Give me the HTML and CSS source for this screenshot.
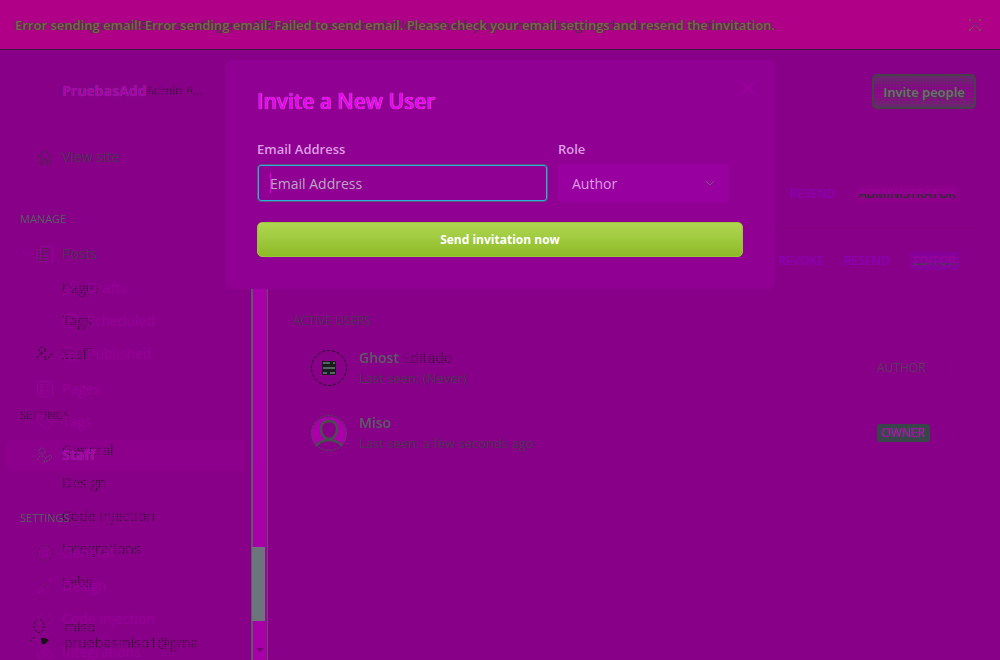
FILE: index.html
```html
<!DOCTYPE html>
<html lang="en">
<head>
<meta charset="utf-8">
<title>Staff - PruebasAdd</title>
<link rel="stylesheet" href="styles.css">
</head>
<body>
<div class="banner" role="alert">
  <div class="banner-text">
    <p class="banner-trail" aria-hidden="true">Error sending email: Error sending email: Failed to send email. Please check your email settings and resend the invitation.</p>
    <p class="banner-main">Error sending email! Error sending email: Failed to send email. Please check your email settings and resend the invitation.</p>
  </div>
  <button class="banner-close" aria-label="Dismiss"><svg width="12" height="12" viewBox="0 0 12 12"><path d="M0 0h2v2H0zM10 0h2v2h-2zM0 10h2v2H0zM10 10h2v2h-2z" fill="currentColor"/><path d="m2 10 3-3M10 10 7 7" stroke="currentColor" fill="none"/><path d="M4 4v2M8 4v2M5 6v2M7 6v2" stroke="#38487c" stroke-dasharray="1 1"/></svg></button>
</div>

<div class="app">
  <aside class="sidebar">
    <nav class="nav">
      <div class="brand"><strong>PruebasAdd</strong><span class="trail">Admin A...</span></div>
      <a class="item view" href="#"><svg class="icon dark" viewBox="0 0 16 16"><path d="M1 8 8 1l7 7M3 7v8h3v-5h4v5h3V7" stroke-dasharray="2 1"/></svg><span class="mixed">View site</span></a>
      <h2 class="heading">MANAGE</h2>
      <a class="item posts" href="#"><svg class="chevron" viewBox="0 0 10 6"><path d="m1 1 4 4 4-4"/></svg><svg class="icon" viewBox="0 0 16 16"><path d="M3.500.500h12v15h-13a2 2 0 0 1-2-2v-10h3M3.500.500v13"/><path class="ink" d="M6 2.500h6M5 5.500h7M5 8.500h4M5 11.500h4M1.500 1v13.500h8" stroke-dasharray="2 1"/></svg><span class="mixed">Posts</span></a>
      <a class="item sub" href="#"><svg class="icon" viewBox="0 0 16 16"><path d="m1 15 1-4 9-9c2-2 5 1 3 3l-9 9zM9 4l3 3"/></svg><span>Drafts</span></a>
      <a class="item sub" href="#"><svg class="icon" viewBox="0 0 16 16"><circle cx="8" cy="8" r="7"/><path d="M8 4v4h4"/></svg><span>Scheduled</span></a>
      <a class="item sub" href="#"><svg class="icon" viewBox="0 0 16 16"><circle cx="8" cy="8" r="7"/><path d="m5 8 2 2 4-4"/></svg><span>Published</span></a>
      <a class="item pages" href="#"><svg class="icon" viewBox="0 0 16 16"><rect x=".5" y=".5" width="15" height="15" rx="1"/><path d="M3.500 3.500h3v3h-3zM3.500 9.500h3v3h-3zM9 3.500h4M9 6.500h3M9 9.500h4M9 12.500h4"/></svg><span>Pages</span></a>
      <a class="item" href="#"><svg class="icon" viewBox="0 0 16 16"><path d="M.5 2v6l9 7.500 6-5.500-8-8-6-1z"/><circle cx="4" cy="4" r="1"/></svg><span>Tags</span></a>
      <a class="item current" href="#"><svg class="icon mid" viewBox="0 0 16 16"><circle cx="5" cy="4" r="3"/><path d="M.5 13c0-3 2-4 4-4 1 0 2 0 3 1M7 15l1-3 5-4 2 2-4 4z"/></svg><strong>Staff</strong></a>
      <h2 class="heading">SETTINGS</h2>
      <a class="item" href="#"><svg class="icon" viewBox="0 0 16 16"><circle cx="8" cy="8" r="3"/><circle cx="8" cy="8" r="6"/><circle class="ink" cx="8" cy="8" r="7" stroke-dasharray="2 3"/></svg><span>General</span></a>
      <a class="item" href="#"><svg class="icon" viewBox="0 0 16 16"><path d="M1 15c0-3 1-5 4-4 2 3-1 4-4 4zM5 10l8-9c2-1 3 1 2 2l-8 9"/><path class="ink" d="m6 10 5-6" stroke-dasharray="2 1"/></svg><span>Design</span></a>
      <a class="item" href="#"><svg class="icon" viewBox="0 0 16 16"><path d="M5 3 .5 8 5 13M11 3l4.500 5L11 13"/><path class="ink" d="m13 10 2-2" stroke-dasharray="1 1"/></svg><span>Code injection</span></a>
      <a class="item" href="#"><svg class="icon" viewBox="0 0 16 16"><circle cx="4" cy="11" r="3.500"/><circle cx="12" cy="11" r="3.500"/><path d="m4 7 4-4 4 4M8 3v5"/></svg><span>Integrations</span></a>
    </nav>
    <div class="trails trail" aria-hidden="true">
      <div class="item">Pages</div>
      <div class="item">Tags</div>
      <div class="item"><svg class="icon dots" viewBox="0 0 16 16"><circle cx="5" cy="4" r="3"/><path d="M.5 12c0-2 2-4 4-4M8 14l6-4 1-3M7 11h3"/></svg>Staff</div>
      <div class="heading">SETTINGS</div>
      <div class="item">General</div>
      <div class="item">Design</div>
      <div class="item">Code injection</div>
      <div class="item">Integrations</div>
      <div class="item">Labs</div>
      <div class="account">
        <svg class="person" viewBox="0 0 20 28"><ellipse cx="9" cy="7" rx="5" ry="6.500"/><path d="m0 22 5-4"/><path d="M11 19h4l4 2-4 4h-3z" fill="currentColor" stroke="none"/></svg>
        <div><div>miso</div><div>pruebasmiso1@gma</div></div>
      </div>
    </div>
    <div class="track"><div class="thumb"></div><svg width="8" height="4" viewBox="0 0 8 4"><path d="M0 0h8L4 4z" fill="currentColor"/></svg></div>
  </aside>

  <main class="main">
    <header class="top"><button class="invite">Invite people</button></header>
    <section class="invited">
      <div class="invite-row"><a href="#">REVOKE</a><a href="#">RESEND</a><span class="role admin">ADMINISTRATOR</span></div>
      <div class="invite-row"><a href="#">REVOKE</a><a href="#">RESEND</a><span class="role editor">EDITOR</span></div>
    </section>
    <section class="active">
      <h2 class="active-title mixed">ACTIVE USERS</h2>
      <div class="user">
        <svg class="avatar" viewBox="0 0 36 36"><circle cx="18" cy="18" r="17.500" fill="none" stroke="#1b1020" stroke-dasharray="3 2"/><path d="M11 11h14v14H11z" fill="#171c1c"/><path d="M12 13h7M22 13h2M12 18h12M12 23h4M19 23h5" stroke="#586464" stroke-width="2"/></svg>
        <div class="who"><h3>Ghost <span class="trail">Editado</span></h3><p class="mixed">Last seen: (Never)</p></div>
        <span class="badge author">AUTHOR</span><svg class="next" viewBox="0 0 8 14"><path d="m1 1 6 6-6 6"/></svg>
      </div>
      <div class="user">
        <svg class="avatar" viewBox="0 0 36 36"><path d="M4 30a17.500 17.500 0 1 1 28 0c-3-3-7-5-14-5S7 27 4 30z" fill="#a900a9"/><circle cx="18" cy="18" r="17.500" fill="none" stroke="#4e4b5b" stroke-dasharray="3 1"/><path d="M18 6c-5 0-8 3-8 8 0 6 4 10 8 10s8-4 8-10c0-5-3-8-8-8z" fill="#870087" stroke="#46504e" stroke-width="2.500"/><path d="M5 31c3-4 7-6 13-6s10 2 13 6" fill="none" stroke="#46504e" stroke-width="2.500"/></svg>
        <div class="who"><h3>Miso</h3><p class="mixed">Last seen: a few seconds ago</p></div>
        <span class="badge owner">OWNER</span><svg class="next" viewBox="0 0 8 14"><path d="m1 1 6 6-6 6"/></svg>
      </div>
    </section>
  </main>
</div>

<form class="modal" role="dialog" aria-labelledby="modal-title">
  <div class="modal-head"><h1 id="modal-title">Invite a New User</h1><button type="button" class="modal-close" aria-label="Close"><svg width="16" height="16" viewBox="0 0 16 16"><path d="m0 0 16 16M16 0 0 16" stroke="currentColor"/></svg></button></div>
  <div class="fields">
    <div class="field email"><label for="email">Email Address</label><div class="email-box"><input id="email" type="email" placeholder="Email Address"></div></div>
    <div class="field role-field"><label for="role">Role</label><div class="select"><select id="role"><option>Author</option></select><svg width="10" height="6" viewBox="0 0 10 6"><path d="m1 1 4 4 4-4" stroke="currentColor" fill="none"/></svg></div></div>
  </div>
  <button type="button" class="send">Send invitation now</button>
</form>
</body>
</html>
```
FILE: styles.css
```css
* { box-sizing: border-box; }
html, body { height: 100%; }
body {
  margin: 0;
  display: flex;
  flex-direction: column;
  overflow: hidden;
  position: relative;
  background: #870087;
  color: #9a009c;
  font: 13px/16px "Open Sans", "Noto Sans", sans-serif;
}
h1, h2, h3, p { margin: 0; font: inherit; }
a { color: inherit; text-decoration: none; }
button { font: inherit; border: 0; padding: 0; background: none; cursor: pointer; }

.trail, .banner-trail {
  color: transparent;
  -webkit-background-clip: text;
  background-clip: text;
}
.trail { background-image: linear-gradient(90deg, #87008700 50%, #870087 50%), linear-gradient(#0c140c 50%, #5a0c5a 50%); background-size: 3px 2px, 3px 2px; }
.mixed { color: #4c3553; }

.banner {
  flex: none;
  display: flex;
  align-items: center;
  justify-content: space-between;
  height: 50px;
  padding: 0 19px 0 15px;
  background: #b00088;
  border-bottom: 1px solid #3d183d;
}
.banner-text { display: grid; white-space: nowrap; }
.banner-text p { grid-area: 1 / 1; }
.banner-main { color: #856252; font-weight: 600; text-shadow: 1px 0 1px #44383f, -1px 0 1px #553448; }
.banner-trail { background-image: linear-gradient(90deg, #30383a 50%, #4a304b 50%); background-size: 2px 2px; }
.banner-close { color: #755347; display: flex; }

.app { flex: 1; display: flex; min-height: 0; }
.sidebar { flex: none; width: 268px; display: grid; grid-template-columns: 251px 17px; overflow: hidden; font-size: 14px; }
.nav, .trails { grid-area: 1 / 1; }
.nav { z-index: 1; }
.brand { display: flex; height: 16px; margin: 33px 0 0 62px; }
.brand .trail { font-size: 12px; }
.brand strong { color: #b000b4; text-shadow: 0 0 1px #52605e; }
.item { display: flex; align-items: center; gap: 9px; height: 33px; margin: 0 6px; padding-left: 31px; border-radius: 4px; }
.view { margin-top: 41px; }
.heading { height: 16px; margin: 38px 20px 10px; font-size: 11px; color: #545f62; }
.view + .heading { margin: 38px 20px 0; }
.posts { position: relative; margin-top: 10px; margin-bottom: 1px; }
.chevron { position: absolute; left: 15px; top: 13px; width: 10px; height: 6px; fill: none; stroke: currentColor; }
.icon { flex: none; width: 16px; height: 16px; fill: none; stroke: currentColor; }
.ink, .dark { stroke: #30342d; }
.mid { stroke: #5b4e68; stroke-dasharray: 2 1; }
.sub { padding-left: 56px; }
.pages { margin-top: 2px; }
.current { background: #ff00ff0b; height: 30px; margin-top: 2px; margin-bottom: 2px; }
.current strong { color: #b000b4; text-shadow: 0 0 1px #52605e; }
.nav .current + .heading { margin: 40px 20px 10px; }
.trails { padding-top: 221px; }
.trails .item { padding-left: 56px; }
.trails .icon { margin-left: -25px; }
.dots, .person { stroke: #171217; fill: none; stroke-dasharray: 2 2; }
.trails .heading { color: transparent; margin: 37px 20px 10px; }
.account { display: flex; gap: 14px; margin: 21px 0 0 30px; }
.person { width: 20px; height: 28px; color: #171217; }
.track {
  grid-column: 2;
  grid-row: 1;
  height: 411px;
  margin-top: 200px;
  display: flex;
  flex-direction: column;
  align-items: center;
  background: #a800a8;
  border-left: 2px solid #5d586a;
  border-right: 1px solid #625063;
  color: #760078;
}
.thumb { flex: none; align-self: stretch; height: 74px; margin: 297px 2px 27px -1px; background: #6b757b; }

.main { flex: 1; min-width: 0; padding: 24px 24px 0 25px; }
.top { display: flex; justify-content: flex-end; }
.invite {
  width: 104px;
  height: 35px;
  border: 2px solid #47404b;
  border-radius: 5px;
  background:
    radial-gradient(#47404b 1px, #47404b00 1px) 0 0 / 3px 3px,
    linear-gradient(#6a2870, #8b048a 40%, #96008f 60%, #6a2870);
  color: #736e78;
  font-weight: 600;
  text-shadow: 0 0 2px #47404b, 1px 1px 1px #47404b;
}
.invited { padding-top: 52px; }
.invite-row { display: flex; justify-content: flex-end; align-items: center; height: 66px; padding-right: 17px; gap: 20px; font-size: 12px; font-weight: 600; color: #8c00b4; }
.invite-row + .invite-row { border-top: 1px solid #82007f; }
.role { padding: 1px 3px; border-radius: 3px; color: transparent; -webkit-background-clip: text, border-box; background-clip: text, border-box; }
.role.admin { background-image: linear-gradient(#9b009b 50%, #28302a 50%), linear-gradient(#8c008a, #8c008a); }
.role.editor { background-image: linear-gradient(#9b009b 60%, #454447 60%), linear-gradient(#86009a, #86009a); }
.active { padding-top: 19px; }
.active-title { display: inline-block; font-size: 12px; }
.user { display: flex; align-items: center; height: 65px; margin: 0 21px 0 18px; }
.active-title + .user { margin-top: 6px; }
.avatar { width: 36px; height: 36px; margin-right: 12px; flex: none; }
.who { flex: 1; line-height: 20px; }
.who h3 { font-size: 14px; font-weight: 600; color: #5b5c66; }
.who h3 .trail { font-weight: 400; }
.badge { padding: 1px 4px; border-radius: 3px; font-size: 12px; width: 53px; }
.author { color: #5b3c61; padding-left: 0; }
.owner { color: #b000b0; background: #38454b; text-shadow: 0 0 1px #6c6574; }
.next { width: 8px; height: 14px; margin-left: 17px; fill: none; stroke: #910091; }

.modal {
  position: absolute;
  top: 60px;
  left: 50%;
  width: min(550px, 90%);
  transform: translateX(-50%);
  padding: 27px 32px 32px;
  border-radius: 6px;
  background: #900093;
  z-index: 2;
}
.modal-head { display: flex; justify-content: space-between; height: 28px; }
.modal h1 { font-size: 21px; line-height: 28px; font-weight: 600; color: #f000f5; text-shadow: 0 0 1px #c0b0c4; }
.modal-close { color: #a600a8; height: 16px; margin-right: -13px; margin-top: -7px; }
.fields { display: flex; gap: 10px; margin-top: 26px; padding-right: 14px; }
.email { flex: 1; }
.field label { display: block; margin-bottom: 7px; color: #dd9de3; font-weight: 600; }
.email-box { position: relative; border: 1px solid #5b5677; border-radius: 4px; }
.email input { display: block; width: 100%; height: 36px; padding: 0 11px; border: 1px solid #2fb0e0; border-radius: 3px; outline: 0; background: #900093; font: 14px "Open Sans", sans-serif; color: #c0a9c5; }
.email input::placeholder { color: #bba8c2; opacity: 1; }
.email-box::after { content: ""; position: absolute; left: 12px; top: 8px; width: 1px; height: 20px; background: #e500e8; }
.role-field { flex: 0 0 171px; }
.select { display: flex; align-items: center; height: 38px; padding: 0 14px; border-radius: 4px; background: #9800a0; color: #77587f; }
.select select { flex: 1; appearance: none; border: 0; padding: 0; background: none; font: 14px "Open Sans", sans-serif; color: #df9ce3; outline: 0; }
.send { display: block; width: 100%; height: 35px; margin-top: 20px; border: 1px solid #9bc43a; border-radius: 5px; background: linear-gradient(#afd752, #8ebb28); color: #fff; font-size: 12px; font-weight: 700; }
```
